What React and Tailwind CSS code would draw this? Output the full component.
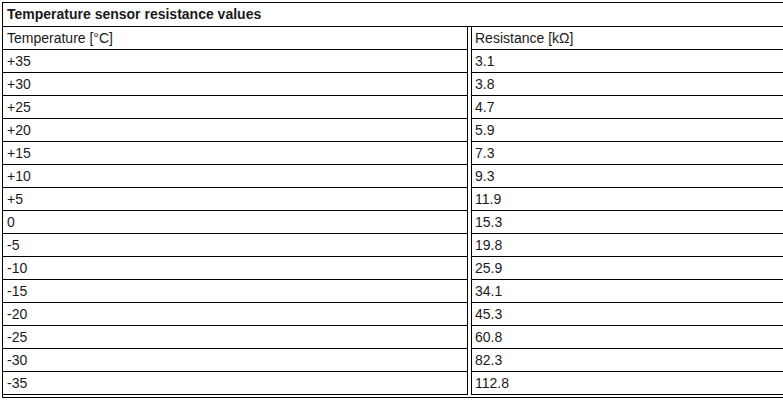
import React from 'react';

const rows = [
  ['+35', '3.1'],
  ['+30', '3.8'],
  ['+25', '4.7'],
  ['+20', '5.9'],
  ['+15', '7.3'],
  ['+10', '9.3'],
  ['+5', '11.9'],
  ['0', '15.3'],
  ['-5', '19.8'],
  ['-10', '25.9'],
  ['-15', '34.1'],
  ['-20', '45.3'],
  ['-25', '60.8'],
  ['-30', '82.3'],
  ['-35', '112.8'],
];

export default function App() {
  return (
    <div className="w-[783px] h-[405px] overflow-hidden bg-white pt-[2px] pl-[2px] text-[14px] text-[#1a1a1a]" style={{ fontFamily: '"Liberation Sans", Arial, sans-serif' }}>
      <div className="w-[800px] border-l border-t border-b border-black pb-[2px]">
        <div className="h-[24px] border-b border-black flex items-center pl-[4px] font-bold">
          Temperature sensor resistance values
        </div>
        <div className="grid grid-cols-[465px_1fr] gap-x-[3px]">
          <div className="h-[23px] border-b border-r border-black flex items-center pl-[4px]">Temperature [°C]</div>
          <div className="h-[23px] border-b border-l border-black flex items-center pl-[3px]">Resistance [kΩ]</div>
          {rows.map(([t, r]) => (
            <React.Fragment key={t}>
              <div className="h-[23px] border-b border-r border-black flex items-center pl-[4px]">{t}</div>
              <div className="h-[23px] border-b border-l border-black flex items-center pl-[3px]">{r}</div>
            </React.Fragment>
          ))}
        </div>
      </div>
    </div>
  );
}
